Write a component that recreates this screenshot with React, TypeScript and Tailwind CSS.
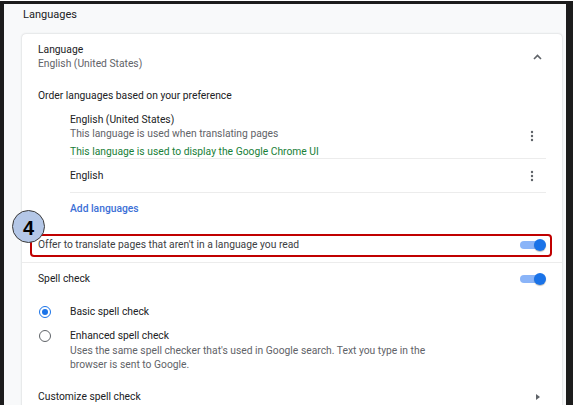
import React from "react";

const Toggle = () => (
  <div className="relative w-[26px] h-[12px] flex items-center">
    <div className="w-[24px] h-[8px] rounded-full bg-[#8ab4f8]" />
    <div className="absolute right-0 top-0 w-[12px] h-[12px] rounded-full bg-[#1a73e8] shadow-[0_1px_1px_rgba(0,0,0,0.25)]" />
  </div>
);

const Kebab = () => (
  <svg width="4" height="12" viewBox="0 0 4 12">
    <circle cx="2" cy="2" r="1.2" fill="#5f6368" />
    <circle cx="2" cy="6" r="1.2" fill="#5f6368" />
    <circle cx="2" cy="10" r="1.2" fill="#5f6368" />
  </svg>
);

export default function App() {
  return (
    <div
      className="w-[573px] h-[405px] overflow-hidden bg-white text-[10.3px] text-[#202124]"
      style={{ fontFamily: "Roboto, 'Liberation Sans', sans-serif" }}
    >
      <div className="mt-[1px] h-[404px] border-t-[3px] border-l-[4px] border-r-[7px] border-[#1c1c1c] bg-[#f8f9fa] overflow-hidden">
        <div className="h-[30px] pl-[19px] pt-[4px] text-[11px] leading-[14px] text-[#202124]">
          Languages
        </div>
        <div className="ml-[18px] mr-[4px] h-[400px] bg-white rounded-t-[4px] shadow-[0_0_2px_rgba(60,64,67,0.3)]">
          {/* Language header */}
          <div className="h-[45px] flex items-center pl-[16px] pr-[20px]">
            <div className="flex-1 leading-[14px]">
              <div>Language</div>
              <div className="text-[#5f6368]">English (United States)</div>
            </div>
            <svg width="9" height="6" viewBox="0 0 9 6">
              <path d="M1 5 L4.5 1.5 L8 5" fill="none" stroke="#5f6368" strokeWidth="1.6" />
            </svg>
          </div>
          <div className="h-[34px] flex items-center pl-[16px]">
            Order languages based on your preference
          </div>
          {/* list */}
          <div className="ml-[48px] mr-[16px]">
            <div className="h-[46px] border-b border-[#ececec] flex items-start">
              <div className="flex-1 leading-[14px]">
                <div>English (United States)</div>
                <div className="text-[#5f6368]">This language is used when translating pages</div>
                <div className="mt-[4px] text-[#188038]">This language is used to display the Google Chrome UI</div>
              </div>
              <div className="self-center pr-[12px] flex">
                <Kebab />
              </div>
            </div>
            <div className="h-[34px] border-b border-[#ececec] flex items-center">
              <div className="flex-1">English</div>
              <div className="pr-[12px] flex">
                <Kebab />
              </div>
            </div>
            <div className="h-[34px] pb-[2px] flex items-center font-medium text-[#3c6fd6]">Add languages</div>
          </div>
          {/* offer translate */}
          <div className="relative h-[36px] border-b border-[#ececec] flex items-center pl-[16px] pr-[16px]">
            <div className="flex-1 text-[#3c4043]">Offer to translate pages that aren't in a language you read</div>
            <Toggle />
            <div className="absolute left-[8px] right-[10px] top-[7px] h-[23px] border-[2px] border-[#c00000] rounded-[4px]" />
            <div className="absolute left-[-10px] top-[-17px] w-[33px] h-[33px] rounded-full bg-[#b4c7e7] border-[1.5px] border-[#3a3a3a] flex items-center justify-center">
              <span
                className="text-[20px] font-bold text-black leading-none mt-[2px]"
                style={{ fontFamily: "'Liberation Sans', Arial, sans-serif" }}
              >
                4
              </span>
            </div>
          </div>
          <div className="h-[32px] flex items-center pl-[16px] pr-[16px]">
            <div className="flex-1">Spell check</div>
            <Toggle />
          </div>
          <div className="h-[34px] flex items-center pl-[17px]">
            <div className="w-[12px] h-[12px] rounded-full border-[1.5px] border-[#1a73e8] flex items-center justify-center">
              <div className="w-[6px] h-[6px] rounded-full bg-[#1a73e8]" />
            </div>
            <div className="ml-[19px]">Basic spell check</div>
          </div>
          <div className="flex items-start pl-[17px] pb-[9px]">
            <div className="mt-[1px] w-[12px] h-[12px] rounded-full border-[1.5px] border-[#5f6368]" />
            <div className="ml-[19px] leading-[14px]">
              <div>Enhanced spell check</div>
              <div className="mt-[1px] text-[#5f6368] w-[370px]">
                Uses the same spell checker that's used in Google search. Text you type in the browser is sent to Google.
              </div>
            </div>
          </div>
          <div className="h-[32px] flex items-center pl-[16px] pr-[22px]">
            <div className="flex-1">Customize spell check</div>
            <svg width="4" height="6" viewBox="0 0 4 6">
              <path d="M0 0 L4 3 L0 6 Z" fill="#5f6368" />
            </svg>
          </div>
        </div>
      </div>
    </div>
  );
}
